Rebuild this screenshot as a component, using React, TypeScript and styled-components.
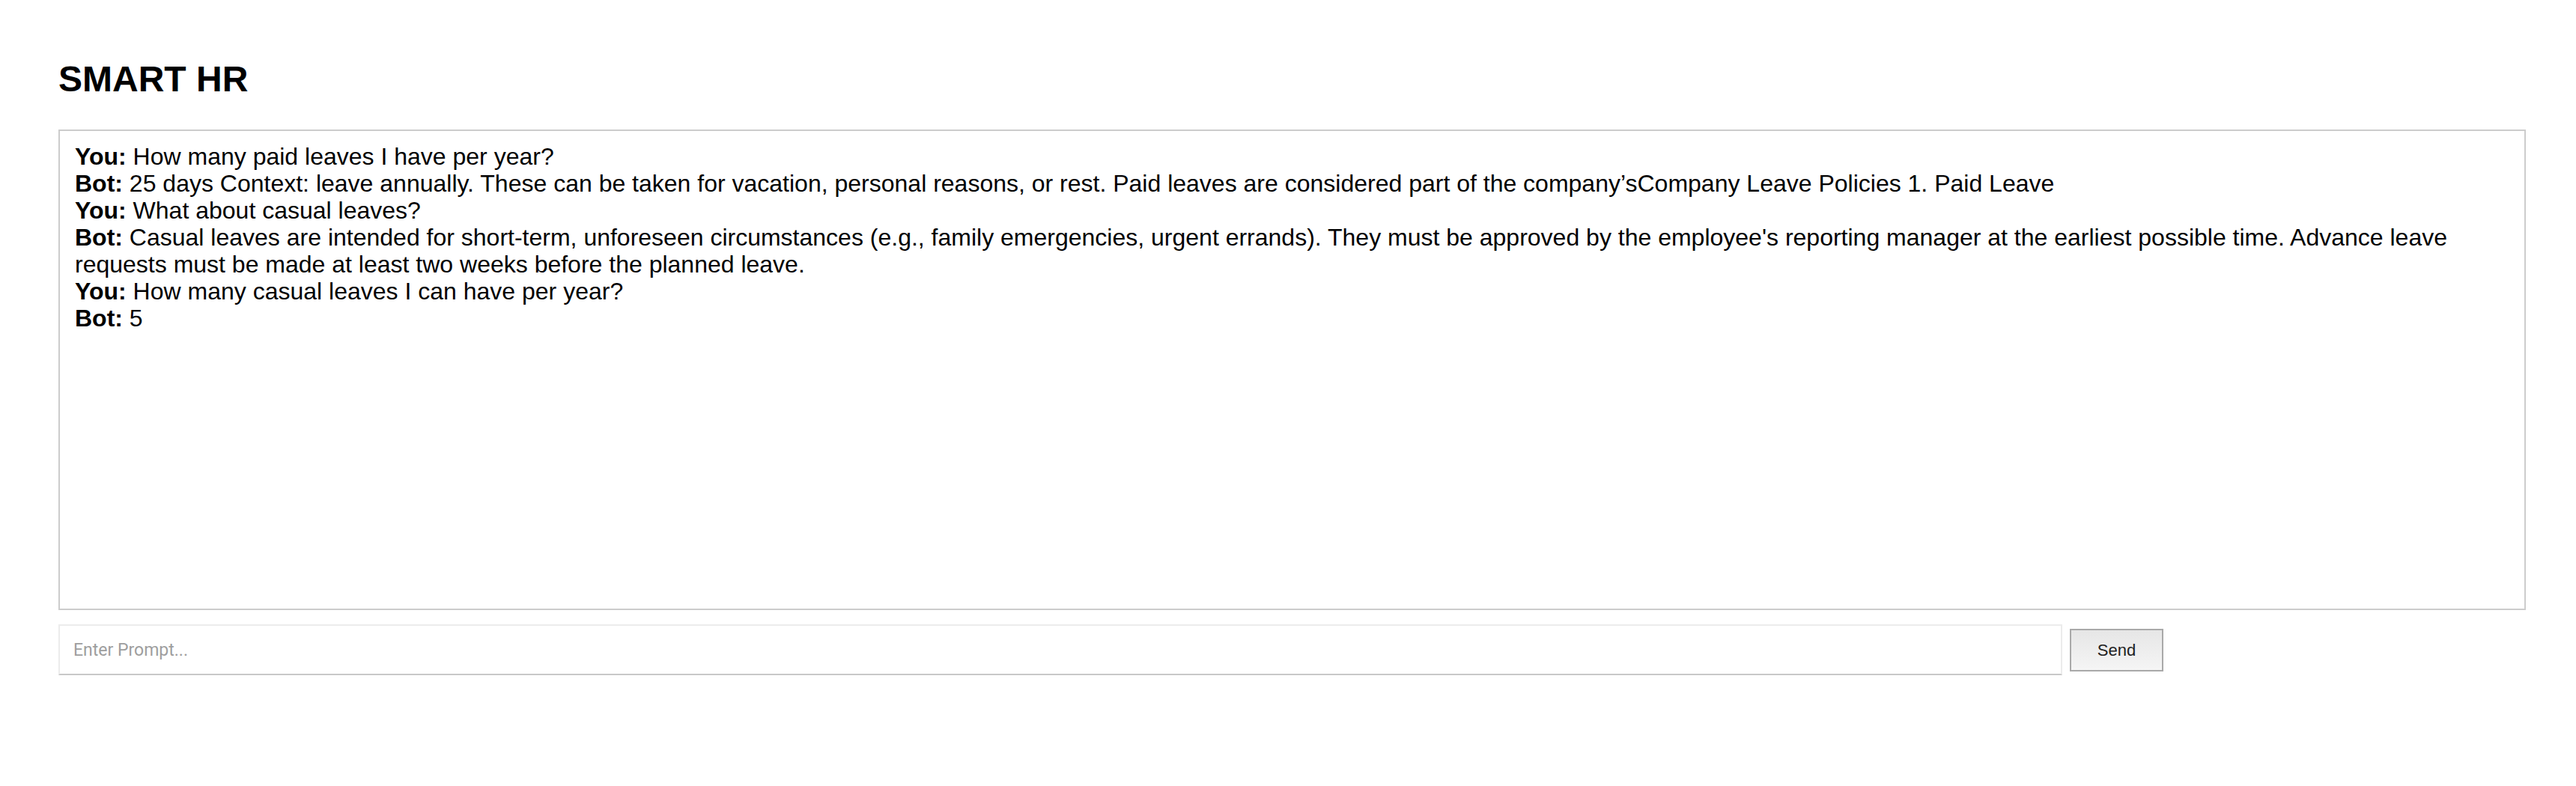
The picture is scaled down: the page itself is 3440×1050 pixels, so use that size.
import React from "react";
import styled, { createGlobalStyle } from "styled-components";

const Global = createGlobalStyle`
  html, body { margin: 0; padding: 0; background: #ffffff; }
  body { font-family: "Liberation Sans", Arial, sans-serif; color: #000; }
`;

const Page = styled.div`
  padding: 78px 0 0 78px;
  display: flex;
  flex-direction: column;
`;

const Title = styled.h1`
  margin: 0 0 40px 0;
  font-family: "Liberation Sans", Arial, sans-serif;
  font-weight: 700;
  font-size: 48px;
  line-height: 55px;
`;

const ChatBox = styled.div`
  box-sizing: border-box;
  width: 3295px;
  height: 642px;
  border: 2px solid #cccccc;
  padding: 16px 20px;
  font-size: 32px;
  line-height: 36px;
  overflow-y: auto;
`;

const Line = styled.div``;

const Speaker = styled.strong`
  font-weight: 700;
`;

const InputRow = styled.div`
  display: flex;
  align-items: flex-start;
  gap: 10px;
  margin-top: 19px;
`;

const PromptInput = styled.input`
  box-sizing: border-box;
  width: 2676px;
  height: 68px;
  border: 2px solid #ececec;
  border-bottom-color: #c8c8c8;
  padding: 0 18px;
  font-family: Roboto, "Noto Sans", sans-serif;
  font-size: 23px;
  outline: none;
  &::placeholder { color: #9e9e9e; }
`;

const SendButton = styled.button`
  box-sizing: border-box;
  width: 125px;
  height: 57px;
  margin-top: 6px;
  border: 2px solid #a9a9a9;
  background: linear-gradient(#e6e6e6, #f5f5f5);
  font-family: "Liberation Sans", Arial, sans-serif;
  font-size: 22px;
  color: #222;
  cursor: pointer;
`;

const messages: { who: string; text: string }[] = [
  { who: "You:", text: "How many paid leaves I have per year?" },
  {
    who: "Bot:",
    text: "25 days Context: leave annually. These can be taken for vacation, personal reasons, or rest. Paid leaves are considered part of the company\u2019sCompany Leave Policies 1. Paid Leave",
  },
  { who: "You:", text: "What about casual leaves?" },
  {
    who: "Bot:",
    text: "Casual leaves are intended for short-term, unforeseen circumstances (e.g., family emergencies, urgent errands). They must be approved by the employee's reporting manager at the earliest possible time. Advance leave requests must be made at least two weeks before the planned leave.",
  },
  { who: "You:", text: "How many casual leaves I can have per year?" },
  { who: "Bot:", text: "5" },
];

export default function App() {
  return (
    <>
      <Global />
      <Page>
        <Title>SMART HR</Title>
        <ChatBox>
          {messages.map((m, i) => (
            <Line key={i}>
              <Speaker>{m.who}</Speaker> {m.text}
            </Line>
          ))}
        </ChatBox>
        <InputRow>
          <PromptInput placeholder="Enter Prompt..." />
          <SendButton>Send</SendButton>
        </InputRow>
      </Page>
    </>
  );
}
